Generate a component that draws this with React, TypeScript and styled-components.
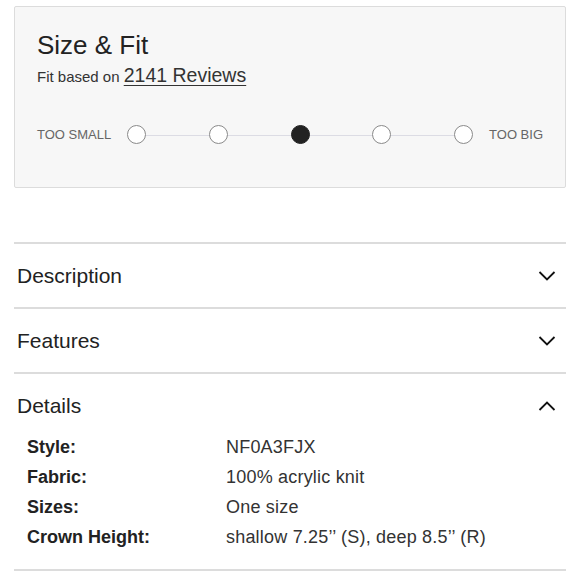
import styled, { createGlobalStyle } from "styled-components";
import { Fragment } from "react";

const GlobalStyle = createGlobalStyle`
  html, body {
    margin: 0;
    padding: 0;
    background: #fff;
    font-family: "Liberation Sans", Arial, sans-serif;
    color: #222;
  }
`

const Page = styled.main`
  width: 580px;
  padding: 6px 14px 0 14px;
  box-sizing: border-box;
`

const FitCard = styled.section`
  background: #f7f7f7;
  border: 1px solid #dcdcdc;
  border-radius: 2px;
  padding: 22px 22px 0 22px;
  height: 182px;
  box-sizing: border-box;
`

const CardTitle = styled.h2`
  margin: 0;
  font-size: 26px;
  font-weight: 400;
  line-height: 32px;
  color: #222;
`

const SubLine = styled.div`
  font-size: 15px;
  line-height: 26px;
  color: #333;
  margin-top: 1px;
`

const ReviewsLink = styled.a`
  font-size: 19.5px;
  color: #333;
  text-decoration: underline;
  text-underline-offset: 3px;
  text-decoration-thickness: 1px;
`

const ScaleRow = styled.div`
  display: flex;
  align-items: center;
  margin-top: 35px;
`

const ScaleLabel = styled.span`
  font-size: 13px;
  color: #666;
  white-space: nowrap;
`

const Track = styled.div`
  flex: 1;
  display: flex;
  justify-content: space-between;
  align-items: center;
  position: relative;
  margin: 0 16px 0 16px;

  &::before {
    content: "";
    position: absolute;
    left: 9px;
    right: 9px;
    top: 50%;
    height: 1px;
    background: #dcdce4;
  }
`

const Dot = styled.span<{ $active?: boolean }>`
  position: relative;
  width: 19px;
  height: 19px;
  border-radius: 50%;
  box-sizing: border-box;
  background: ${(p) => (p.$active ? "#222" : "#fff")};
  border: 1.5px solid ${(p) => (p.$active ? "#222" : "#8a8a8a")};
`

const Accordion = styled.div`
  margin-top: 54px;
  border-top: 2px solid #dcdcdc;
`

const Section = styled.div`
  border-bottom: 2px solid #dcdcdc;
`

const SectionHeader = styled.div`
  display: flex;
  align-items: center;
  justify-content: space-between;
  height: 63px;
  padding: 0 10px 0 3px;
`

const SectionTitle = styled.span`
  font-size: 21px;
  color: #222;
`

const DetailsTable = styled.div`
  display: grid;
  grid-template-columns: 199px 1fr;
  grid-auto-rows: 30px;
  align-items: center;
  padding: 0 0 17px 13px;
  margin-top: -5px;
`

const DetailLabel = styled.span`
  font-size: 18px;
  font-weight: 700;
  color: #222;
`

const DetailValue = styled.span`
  font-size: 18px;
  letter-spacing: 0.2px;
  color: #333;
`

function Chevron({ up }: { up?: boolean }) {
  return (
    <svg width="18" height="12" viewBox="0 0 18 12" fill="none">
      <path
        d={up ? "M1.5 10 L9 2.5 L16.5 10" : "M1.5 2 L9 9.5 L16.5 2"}
        stroke="#111"
        strokeWidth="1.8"
      />
    </svg>
  )
}

const details = [
  ["Style:", "NF0A3FJX"],
  ["Fabric:", "100% acrylic knit"],
  ["Sizes:", "One size"],
  ["Crown Height:", "shallow 7.25’’ (S), deep 8.5’’ (R)"],
]

export default function App() {
  const active = 2
  return (
    <>
      <GlobalStyle />
      <Page>
        <FitCard>
          <CardTitle>Size &amp; Fit</CardTitle>
          <SubLine>
            Fit based on <ReviewsLink>2141 Reviews</ReviewsLink>
          </SubLine>
          <ScaleRow>
            <ScaleLabel>TOO SMALL</ScaleLabel>
            <Track>
              {[0, 1, 2, 3, 4].map((i) => (
                <Dot key={i} $active={i === active} />
              ))}
            </Track>
            <ScaleLabel>TOO BIG</ScaleLabel>
          </ScaleRow>
        </FitCard>

        <Accordion>
          <Section>
            <SectionHeader>
              <SectionTitle>Description</SectionTitle>
              <Chevron />
            </SectionHeader>
          </Section>
          <Section>
            <SectionHeader>
              <SectionTitle>Features</SectionTitle>
              <Chevron />
            </SectionHeader>
          </Section>
          <Section>
            <SectionHeader>
              <SectionTitle>Details</SectionTitle>
              <Chevron up />
            </SectionHeader>
            <DetailsTable>
              {details.map(([k, v]) => (
                <Fragment key={k}>
                  <DetailLabel>{k}</DetailLabel>
                  <DetailValue>{v}</DetailValue>
                </Fragment>
              ))}
            </DetailsTable>
          </Section>
        </Accordion>
      </Page>
    </>
  )
}
